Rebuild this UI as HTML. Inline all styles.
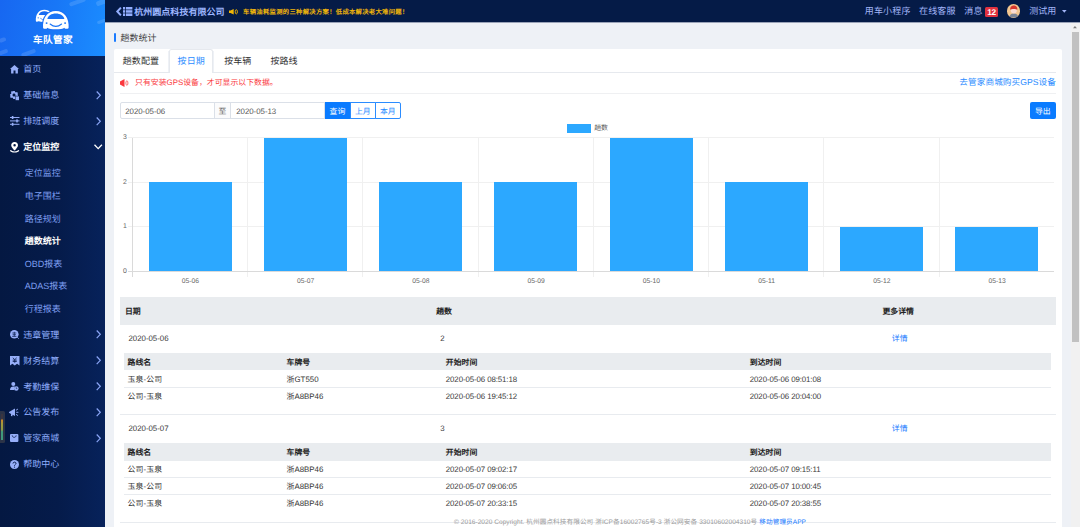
<!DOCTYPE html>
<html lang="zh-CN">
<head>
<meta charset="utf-8">
<title>趟数统计 - 车队管家</title>
<style>
*{box-sizing:border-box;margin:0;padding:0}
html,body{width:1080px;height:527px;overflow:hidden}
body{position:relative;background:#eef1f6;font-family:"Liberation Sans",sans-serif;color:#333;font-size:7.875px;text-rendering:geometricPrecision}
.t{position:absolute;white-space:nowrap;height:12px;line-height:12px}
.j{text-align:justify;text-align-last:justify}
.abs{position:absolute}
svg{position:absolute;overflow:visible}
#side{position:absolute;left:0;top:0;width:105px;height:527px;background:linear-gradient(90deg,#041842 0%,#051b4a 55%,#07225b 100%);overflow:hidden}
#logo{position:absolute;left:0;top:0;width:105px;height:56px;background:linear-gradient(100deg,#1767f1 0%,#1877f7 50%,#1b8dff 100%);overflow:hidden}
#top{position:absolute;left:105px;top:0;width:975px;height:22px;background:#051b47;box-shadow:0 1px 0 #9aa3b8}
#card{position:absolute;left:113.8px;top:49px;width:948.2px;height:478px;background:#fff;border-radius:2px 2px 0 0}
</style>
</head>
<body>
<div id="side">
<div id="logo">
<div class="abs" style="left:69px;top:0.2px;width:17px;height:4px;background:rgba(255,255,255,.13);border-radius:2px;transform:rotate(-20deg)"></div>
<div class="abs" style="left:96px;top:0.25px;width:10px;height:4.5px;background:rgba(255,255,255,.13);border-radius:2px;transform:rotate(-20deg)"></div>
<div class="abs" style="left:96.5px;top:19.5px;width:9px;height:3px;background:rgba(255,255,255,.13);border-radius:2px;transform:rotate(-20deg)"></div>
<div class="abs" style="left:-1px;top:38.25px;width:7px;height:3.5px;background:rgba(255,255,255,.13);border-radius:2px;transform:rotate(-20deg)"></div>
<div class="abs" style="left:-1.5px;top:50px;width:9px;height:4px;background:rgba(255,255,255,.13);border-radius:2px;transform:rotate(-20deg)"></div>
<div class="abs" style="left:21px;top:50.5px;width:15px;height:4px;background:rgba(255,255,255,.13);border-radius:2px;transform:rotate(-20deg)"></div>
<svg style="left:35px;top:9px" width="36" height="22" viewBox="0 0 36 22">
<g transform="translate(.6,.7) scale(.67) translate(-7.7,-2)"><path d="M8.1 19 C7.3 9 12.5 2 20.85 2 C29.2 2 34.4 9 33.6 19 Q33.3 19.9 32.3 19.8 L30.5 19.7 Q29.6 19.6 29.4 18.8 C27 20.8 14.7 20.8 12.3 18.8 Q12.1 19.6 11.2 19.7 L9.4 19.8 Q8.4 19.9 8.1 19 Z" fill="#fff"/>
<path d="M12.3 10 C13 6.500 16.500 4.400 20.85 4.400 C25.2 4.400 28.7 6.500 29.400 10 Z" fill="#186cf3"/>
<circle cx="11.600" cy="14.100" r=".95" fill="#186cf3"/><circle cx="30.100" cy="14.100" r=".95" fill="#186cf3"/>
<path d="M15.100 15 Q20.85 19.800 26.600 15" fill="none" stroke="#186cf3" stroke-width="1.05" stroke-linecap="round"/></g>
<path d="M8.1 19 C7.3 9 12.5 2 20.85 2 C29.2 2 34.4 9 33.6 19 Q33.3 19.9 32.3 19.8 L30.5 19.7 Q29.6 19.6 29.4 18.8 C27 20.8 14.7 20.8 12.3 18.8 Q12.1 19.6 11.2 19.7 L9.4 19.8 Q8.4 19.9 8.1 19 Z" fill="#fff" stroke="#1a70f5" stroke-width="2.200" paint-order="stroke"/>
<path d="M12.3 10 C13 6.500 16.500 4.400 20.85 4.400 C25.2 4.400 28.7 6.500 29.400 10 Z" fill="#1a74f6"/>
<circle cx="11.600" cy="14.100" r=".95" fill="#1a74f6"/><circle cx="30.100" cy="14.100" r=".95" fill="#1a74f6"/>
<path d="M15.100 15 Q20.85 19.800 26.600 15" fill="none" stroke="#1a74f6" stroke-width="1.05" stroke-linecap="round"/></svg>
<div class="t j" style="left:33px;top:34.5px;width:39.5px;font-size:9.6px;color:#fff;font-weight:bold;">车队管家</div>
</div>
<svg style="left:9.7px;top:64.8px" width="9" height="8.6" viewBox="0 0 9 8.6"><path d="M4.5 0 L9 4.1 L7.9 4.1 L7.9 8.6 L5.5 8.6 L5.5 5.6 L3.5 5.6 L3.5 8.6 L1.1 8.6 L1.1 4.1 L0 4.1 Z" fill="#97aff9"/></svg>
<div class="t j" style="left:23.2px;top:63.2px;width:18px;font-size:9px;color:#8fadfd;">首页</div>
<svg style="left:9.5px;top:90.5px" width="9" height="9.2" viewBox="0 0 9 9.2"><path d="M3.2 0 H4.8 L5.1 1 L6 1.4 L6.9 .9 L8 2 L7.5 2.9 L7.9 3.8 L8 4.8 H5.2 V8 H3.2 L2.9 7 L2 6.6 L1.1 7.1 L0 6 L.5 5.1 L.1 4.2 L0 3.2 L1 2.9 L1.4 2 L.9 1.1 L2 0 L2.9 .5 Z M4 2.5 A1.5 1.5 0 1 0 4 5.5 A1.5 1.5 0 1 0 4 2.5 Z" fill="#97aff9" fill-rule="evenodd"/><rect x="5.6" y="5.4" width="3.4" height="3.8" fill="#97aff9"/></svg>
<div class="t j" style="left:23.2px;top:89.1px;width:36px;font-size:9px;color:#8fadfd;">基础信息</div>
<svg style="left:96px;top:90.8px" width="5" height="8.6" viewBox="0 0 5 8.6"><path d="M.7 .5 L4.3 4.3 L.7 8.1" fill="none" stroke="#8aa4f5" stroke-width="1.2"/></svg>
<svg style="left:9.5px;top:116.1px" width="9.5" height="9.8" viewBox="0 0 9.5 9.8"><path d="M0 1.5 H9.5 M0 4.9 H9.5 M0 8.3 H9.5" stroke="#97aff9" stroke-width="1" fill="none"/><g fill="#97aff9"><rect x="1.8" y="0" width="1.6" height="3"/><rect x="6.2" y="3.4" width="1.6" height="3"/><rect x="1.8" y="6.8" width="1.6" height="3"/></g></svg>
<div class="t j" style="left:23.2px;top:115px;width:36px;font-size:9px;color:#8fadfd;">排班调度</div>
<svg style="left:96px;top:116.7px" width="5" height="8.6" viewBox="0 0 5 8.6"><path d="M.7 .5 L4.3 4.3 L.7 8.1" fill="none" stroke="#8aa4f5" stroke-width="1.2"/></svg>
<svg style="left:9.7px;top:141.8px" width="9.2" height="10.6" viewBox="0 0 9.2 10.6"><path d="M4.600 -.1 C6.800 -.1 8 1.400 8 3.200 C8 5.200 5.900 7.100 4.600 8.500 C3.300 7.100 1.200 5.200 1.200 3.200 C1.200 1.400 2.400 -.1 4.600 -.1 Z M4.600 1.900 A1.250 1.250 0 1 0 4.600 4.400 A1.250 1.250 0 1 0 4.600 1.900 Z" fill="#fff" fill-rule="evenodd"/><path d="M.4 8.200 C1.500 10.600 7.700 10.600 8.800 8.200" fill="none" stroke="#fff" stroke-width="1.150"/></svg>
<div class="t j" style="left:23.2px;top:141px;width:36px;font-size:9px;color:#fff;font-weight:bold;">定位监控</div>
<svg style="left:94.4px;top:144.2px" width="8.4" height="5.6" viewBox="0 0 8.4 5.6"><path d="M.5 .7 L4.2 4.6 L7.9 .7" fill="none" stroke="#fff" stroke-width="1.3"/></svg>
<svg style="left:9.9px;top:330px" width="9.4" height="9.4" viewBox="0 0 9.4 9.4"><circle cx="4.3" cy="4.3" r="4.3" fill="#97aff9"/><path d="M7.200 7.200 L8.700 8.700" stroke="#97aff9" stroke-width=".9"/><path d="M2.3 3 H6.3 M4.3 1.8 V6.3 M2.6 4.7 H6 M2.2 6.4 H6.4" stroke="#061b4b" stroke-width=".7" fill="none"/></svg>
<div class="t j" style="left:23.2px;top:328.6px;width:36px;font-size:9px;color:#8fadfd;">违章管理</div>
<svg style="left:96px;top:330.3px" width="5" height="8.6" viewBox="0 0 5 8.6"><path d="M.7 .5 L4.3 4.3 L.7 8.1" fill="none" stroke="#8aa4f5" stroke-width="1.2"/></svg>
<svg style="left:9.5px;top:355.9px" width="9.5" height="9.6" viewBox="0 0 9.5 9.6"><path d="M0 0 H9.5 V9.6 L7.1 7.8 L4.75 9.6 L2.4 7.8 L0 9.6 Z" fill="#97aff9"/><path d="M2.8 1.8 L4.75 3.6 L6.7 1.8 M2.7 4.1 H6.8 M2.7 5.5 H6.8 M4.75 3.6 V6.8" stroke="#061b4b" stroke-width=".8" fill="none"/></svg>
<div class="t j" style="left:23.2px;top:354.6px;width:36px;font-size:9px;color:#8fadfd;">财务结算</div>
<svg style="left:96px;top:356.3px" width="5" height="8.6" viewBox="0 0 5 8.6"><path d="M.7 .5 L4.3 4.3 L.7 8.1" fill="none" stroke="#8aa4f5" stroke-width="1.2"/></svg>
<svg style="left:9.9px;top:382.2px" width="8.6" height="8.8" viewBox="0 0 8.6 8.8"><circle cx="3.3" cy="2" r="2" fill="#97aff9"/><path d="M0 8 C0 5.5 1.5 4.4 3.3 4.4 C4 4.4 4.6 4.5 5 4.8 C4.2 5.6 4 6.8 4.4 8 Z" fill="#97aff9"/><circle cx="6.3" cy="6.5" r="2.3" fill="#97aff9"/><path d="M6.3 5.3 V6.6 H7.3" stroke="#061b4b" stroke-width=".6" fill="none"/></svg>
<div class="t j" style="left:23.2px;top:380.5px;width:36px;font-size:9px;color:#8fadfd;">考勤维保</div>
<svg style="left:96px;top:382.2px" width="5" height="8.6" viewBox="0 0 5 8.6"><path d="M.7 .5 L4.3 4.3 L.7 8.1" fill="none" stroke="#8aa4f5" stroke-width="1.2"/></svg>
<svg style="left:9.2px;top:407.9px" width="9.4" height="8.8" viewBox="0 0 9.4 8.8"><path d="M0 4 L6 .6 V8 L3.6 6.7 L3.3 8.3 L1.9 8 L2.1 5.9 L0 4.7 Z" fill="#97aff9"/><path d="M7 2.3 L9 1 M7.2 4.3 H9.4 M7 6.3 L9 7.6" stroke="#97aff9" stroke-width=".9" fill="none"/></svg>
<div class="t j" style="left:23.2px;top:406.3px;width:36px;font-size:9px;color:#8fadfd;">公告发布</div>
<svg style="left:96px;top:408px" width="5" height="8.6" viewBox="0 0 5 8.6"><path d="M.7 .5 L4.3 4.3 L.7 8.1" fill="none" stroke="#8aa4f5" stroke-width="1.2"/></svg>
<svg style="left:9.9px;top:434.2px" width="8.4" height="8" viewBox="0 0 8.4 8"><rect x="0" y="0" width="8.4" height="8" rx="1" fill="#97aff9"/><path d="M2.2 1.4 C2.4 4 6 4 6.2 1.4" stroke="#061b4b" stroke-width=".8" fill="none"/></svg>
<div class="t j" style="left:23.2px;top:432.2px;width:36px;font-size:9px;color:#8fadfd;">管家商城</div>
<svg style="left:96px;top:433.9px" width="5" height="8.6" viewBox="0 0 5 8.6"><path d="M.7 .5 L4.3 4.3 L.7 8.1" fill="none" stroke="#8aa4f5" stroke-width="1.2"/></svg>
<svg style="left:9.5px;top:459.5px" width="9" height="9" viewBox="0 0 9 9"><circle cx="4.5" cy="4.5" r="4.5" fill="#97aff9"/><path d="M3 3.5 C3 1.7 6 1.7 6 3.4 C6 4.5 4.5 4.5 4.5 5.7" stroke="#061b4b" stroke-width="1" fill="none"/><circle cx="4.5" cy="7.1" r=".6" fill="#061b4b"/></svg>
<div class="t j" style="left:23.2px;top:458px;width:36px;font-size:9px;color:#8fadfd;">帮助中心</div>
<div class="t j" style="left:24.7px;top:167.4px;width:36px;font-size:9px;color:#7f9ff2;">定位监控</div>
<div class="t j" style="left:24.7px;top:190.1px;width:36px;font-size:9px;color:#7f9ff2;">电子围栏</div>
<div class="t j" style="left:24.7px;top:212.6px;width:36px;font-size:9px;color:#7f9ff2;">路径规划</div>
<div class="t j" style="left:24.7px;top:234.9px;width:36px;font-size:9px;color:#fff;font-weight:bold;">趟数统计</div>
<div class="t" style="left:24.7px;top:257.5px;font-size:9px;color:#7f9ff2;">OBD报表</div>
<div class="t" style="left:24.7px;top:280.1px;font-size:9px;color:#7f9ff2;">ADAS报表</div>
<div class="t j" style="left:24.7px;top:302.6px;width:36px;font-size:9px;color:#7f9ff2;">行程报表</div>
<div class="abs" style="left:0px;top:411px;width:5.2px;height:32px;background:#2b3347;border-radius:0 1.5px 1.5px 0"></div>
<div class="abs" style="left:1px;top:413.6px;width:2.4px;height:26.6px;background:linear-gradient(180deg,#3a3540 0%,#3a3540 18%,#c8862e 24%,#a39a3c 38%,#8d9a45 60%,#3f9a7c 68%,#3f9a7c 100%);"></div>
</div>
<div id="top">
<svg style="left:10.6px;top:7px" width="5.6" height="9" viewBox="0 0 5.6 9"><path d="M4.9 .6 L1.3 4.5 L4.9 8.4" fill="none" stroke="#93aefe" stroke-width="2"/></svg>
<svg style="left:18.2px;top:7px" width="9.4" height="9" viewBox="0 0 9.4 9"><g fill="#93aefe"><rect x="0" y="0" width="2.2" height="2.5"/><rect x="3" y="0" width="6.4" height="2.5"/><rect x="0" y="3.2" width="2.2" height="2.5"/><rect x="3" y="3.2" width="6.4" height="2.5"/><rect x="0" y="6.4" width="2.2" height="2.6"/><rect x="3" y="6.4" width="6.4" height="2.6"/></g></svg>
<div class="t j" style="left:29.3px;top:5.5px;width:90.2px;font-size:9px;color:#9db6ff;font-weight:bold;">杭州圆点科技有限公司</div>
<svg style="left:123.9px;top:8.7px" width="9.2" height="5.6" viewBox="0 0 9.2 5.6"><path d="M0 1.600 L1.500 1.600 L4.700 0 V5.600 L1.500 4 H0 Z" fill="#f2b705"/><ellipse cx="7.3" cy="2.8" rx="1.1" ry="2.1" fill="none" stroke="#f2b705" stroke-width=".9"/></svg>
<div class="t j" style="left:138.1px;top:6.5px;width:165.2px;font-size:6.34px;color:#f0b50a;font-weight:bold;">车辆油耗监测的三种解决方案！低成本解决老大难问题！</div>
<div class="t j" style="left:759.8px;top:5.2px;width:45.6px;font-size:9px;color:#a3b6f8;">用车小程序</div>
<div class="t j" style="left:814.1px;top:5.2px;width:36.4px;font-size:9px;color:#a3b6f8;">在线客服</div>
<div class="t j" style="left:859.3px;top:5.2px;width:18.2px;font-size:9px;color:#a3b6f8;">消息</div>
<div class="abs" style="left:880.2px;top:6.8px;width:12.8px;height:10.1px;background:#e1323f;border-radius:1.500px"></div>
<div class="t" style="left:880.2px;top:6.4px;font-size:8.3px;letter-spacing:-0.3px;color:#fff;font-weight:bold;width:12.800px;text-align:center;">12</div>
<div class="abs" style="left:901.7px;top:4.2px;width:13.6px;height:13.6px;border-radius:50%;overflow:hidden;background:#f3c690"><svg style="left:0;top:0" width="13.6" height="13.6" viewBox="0 0 13.6 13.6"><path d="M2.6 13.6 C2.6 10.2 4.6 9.4 6.8 9.4 C9 9.4 11 10.2 11 13.6 Z" fill="#7c8596"/><circle cx="6.8" cy="6.6" r="3" fill="#fbdcd2"/><path d="M3.2 5.8 C3 2.6 5 1.6 6.8 1.6 C8.6 1.6 10.6 2.6 10.4 5.8 C9.2 4.8 4.4 4.8 3.2 5.8 Z" fill="#d8372e"/></svg></div>
<div class="t j" style="left:924.2px;top:5.2px;width:27px;font-size:9px;color:#a3b6f8;">测试用</div>
<svg style="left:956.5px;top:9.6px" width="4.6" height="2.8" viewBox="0 0 4.6 2.8"><path d="M0 0 H4.6 L2.3 2.8 Z" fill="#a3b6f8"/></svg>
</div>
<div class="abs" style="left:113.5px;top:33px;width:2.5px;height:9px;background:#1a7bff;border-radius:1px"></div>
<div class="t j" style="left:120.4px;top:31.6px;width:36px;font-size:9px;color:#444;">趟数统计</div>
<div id="card"></div>
<div class="abs" style="left:113.8px;top:72px;width:54.8px;height:1px;background:#e6e9ee;"></div>
<div class="abs" style="left:213.3px;top:72px;width:842.4px;height:1px;background:#e6e9ee;"></div>
<div class="abs" style="left:168.6px;top:49px;width:44.6px;height:24px;background:#fff;border:1px solid #e6e9ee;border-bottom:0;border-radius:2.5px 2.5px 0 0"></div>
<div class="abs" style="left:168.2px;top:51px;width:1px;height:21px;background:#eef1f6;"></div>
<div class="abs" style="left:213.3px;top:51px;width:1px;height:21px;background:#eef1f6;"></div>
<div class="t j" style="left:122.8px;top:54.6px;width:36.2px;font-size:9px;color:#333;">趟数配置</div>
<div class="t j" style="left:177.6px;top:54.6px;width:27.2px;font-size:9px;color:#2b8cff;">按日期</div>
<div class="t j" style="left:224.2px;top:54.6px;width:27.2px;font-size:9px;color:#333;">按车辆</div>
<div class="t j" style="left:270.4px;top:54.6px;width:27.2px;font-size:9px;color:#333;">按路线</div>
<svg style="left:119.7px;top:78.5px" width="8.4" height="8.1" viewBox="0 0 8.4 8.1"><path d="M0 2.500 L4.500 0 V8.100 L0 5.600 Z" fill="#fa383d"/><ellipse cx="6.9" cy="4.05" rx="1.05" ry="2.25" fill="none" stroke="#fa383d" stroke-width=".85" opacity=".85"/></svg>
<div class="t j" style="left:135px;top:77.2px;width:142.7px;font-size:7.88px;color:#fa383d;">只有安装GPS设备，才可显示以下数据。</div>
<div class="t j" style="left:959.3px;top:76.2px;width:96.6px;font-size:8.65px;color:#2b8cff;">去管家商城购买GPS设备</div>
<div class="abs" style="left:120px;top:92.6px;width:935.6px;height:1px;background:#eff0f2;"></div>
<div class="abs" style="left:120.2px;top:102.2px;width:94.4px;height:17.2px;background:#fff;border:1px solid #dbe0e8;border-radius:2px 0 0 2px"></div>
<div class="t" style="left:125.2px;top:106px;font-size:7.88px;letter-spacing:-0.03px;color:#555;">2020-05-06</div>
<div class="abs" style="left:213.6px;top:102.2px;width:17.8px;height:17.2px;background:#fbfbfc;border:1px solid #dbe0e8"></div>
<div class="t j" style="left:218.4px;top:106px;width:7.88px;font-size:7.88px;color:#666;">至</div>
<div class="abs" style="left:230.4px;top:102.2px;width:95px;height:17.2px;background:#fff;border:1px solid #dbe0e8"></div>
<div class="t" style="left:236.2px;top:106px;font-size:7.88px;letter-spacing:-0.03px;color:#555;">2020-05-13</div>
<div class="abs" style="left:324.7px;top:102.2px;width:25.5px;height:17.2px;background:#0a7bff;"></div>
<div class="t j" style="left:329.6px;top:106px;width:15.75px;font-size:7.88px;color:#fff;">查询</div>
<div class="abs" style="left:350.2px;top:102.2px;width:25.5px;height:17.2px;background:#fff;border:1px solid #2b8cff"></div>
<div class="t j" style="left:354.9px;top:106px;width:15.75px;font-size:7.88px;color:#2b8cff;">上月</div>
<div class="abs" style="left:375px;top:102.2px;width:25.7px;height:17.2px;background:#fff;border:1px solid #2b8cff;border-radius:0 2px 2px 0"></div>
<div class="t j" style="left:380px;top:106px;width:15.75px;font-size:7.88px;color:#2b8cff;">本月</div>
<div class="abs" style="left:1030px;top:102.2px;width:25.6px;height:17.2px;background:#0a7bff;border-radius:2px"></div>
<div class="t j" style="left:1035px;top:106px;width:15.75px;font-size:7.88px;color:#fff;">导出</div>
<div class="abs" style="left:567.1px;top:124.4px;width:24.3px;height:8.4px;background:#2ca8ff;"></div>
<div class="t j" style="left:594.2px;top:122.7px;width:13.8px;font-size:6.9px;color:#555;">趟数</div>
<div class="abs" style="left:127.8px;top:137.4px;width:926.5px;height:1px;background:#f0f0f0;"></div>
<div class="abs" style="left:127.8px;top:181.87px;width:926.5px;height:1px;background:#f0f0f0;"></div>
<div class="abs" style="left:127.8px;top:226.33px;width:926.5px;height:1px;background:#f0f0f0;"></div>
<div class="abs" style="left:247.05px;top:137.9px;width:1px;height:138.9px;background:#f0f0f0;"></div>
<div class="abs" style="left:362.3px;top:137.9px;width:1px;height:138.9px;background:#f0f0f0;"></div>
<div class="abs" style="left:477.55px;top:137.9px;width:1px;height:138.9px;background:#f0f0f0;"></div>
<div class="abs" style="left:592.8px;top:137.9px;width:1px;height:138.9px;background:#f0f0f0;"></div>
<div class="abs" style="left:708.05px;top:137.9px;width:1px;height:138.9px;background:#f0f0f0;"></div>
<div class="abs" style="left:823.3px;top:137.9px;width:1px;height:138.9px;background:#f0f0f0;"></div>
<div class="abs" style="left:938.55px;top:137.9px;width:1px;height:138.9px;background:#f0f0f0;"></div>
<div class="abs" style="left:131.8px;top:137.9px;width:1px;height:138.9px;background:#dadada;"></div>
<div class="abs" style="left:127.8px;top:270.8px;width:926.5px;height:1px;background:#dadada;"></div>
<div class="abs" style="left:148.7px;top:182.37px;width:83px;height:88.53px;background:#2ca8ff;"></div>
<div class="abs" style="left:263.95px;top:137.9px;width:83px;height:133px;background:#2ca8ff;"></div>
<div class="abs" style="left:379.2px;top:182.37px;width:83px;height:88.53px;background:#2ca8ff;"></div>
<div class="abs" style="left:494.45px;top:182.37px;width:83px;height:88.53px;background:#2ca8ff;"></div>
<div class="abs" style="left:609.7px;top:137.9px;width:83px;height:133px;background:#2ca8ff;"></div>
<div class="abs" style="left:724.95px;top:182.37px;width:83px;height:88.53px;background:#2ca8ff;"></div>
<div class="abs" style="left:840.2px;top:226.83px;width:83px;height:44.07px;background:#2ca8ff;"></div>
<div class="abs" style="left:955.45px;top:226.83px;width:83px;height:44.07px;background:#2ca8ff;"></div>
<div class="t" style="left:118.3px;top:132.3px;font-size:6.9px;color:#666;width:8.600px;text-align:right;">3</div>
<div class="t" style="left:118.3px;top:176.77px;font-size:6.9px;color:#666;width:8.600px;text-align:right;">2</div>
<div class="t" style="left:118.3px;top:221.23px;font-size:6.9px;color:#666;width:8.600px;text-align:right;">1</div>
<div class="t" style="left:118.3px;top:265.7px;font-size:6.9px;color:#666;width:8.600px;text-align:right;">0</div>
<div class="t" style="left:170.43px;top:275.8px;font-size:6.75px;color:#666;width:40px;text-align:center;">05-06</div>
<div class="t" style="left:285.68px;top:275.8px;font-size:6.75px;color:#666;width:40px;text-align:center;">05-07</div>
<div class="t" style="left:400.93px;top:275.8px;font-size:6.75px;color:#666;width:40px;text-align:center;">05-08</div>
<div class="t" style="left:516.17px;top:275.8px;font-size:6.75px;color:#666;width:40px;text-align:center;">05-09</div>
<div class="t" style="left:631.42px;top:275.8px;font-size:6.75px;color:#666;width:40px;text-align:center;">05-10</div>
<div class="t" style="left:746.67px;top:275.8px;font-size:6.75px;color:#666;width:40px;text-align:center;">05-11</div>
<div class="t" style="left:861.92px;top:275.8px;font-size:6.75px;color:#666;width:40px;text-align:center;">05-12</div>
<div class="t" style="left:977.17px;top:275.8px;font-size:6.75px;color:#666;width:40px;text-align:center;">05-13</div>
<div class="abs" style="left:119.9px;top:297.3px;width:935.7px;height:27.4px;background:#e9ecef;"></div>
<div class="t j" style="left:125px;top:306px;width:15.75px;font-size:7.88px;color:#222;font-weight:bold;">日期</div>
<div class="t j" style="left:436.2px;top:306px;width:15.75px;font-size:7.88px;color:#222;font-weight:bold;">趟数</div>
<div class="t j" style="left:882.4px;top:306px;width:31.5px;font-size:7.88px;color:#222;font-weight:bold;">更多详情</div>
<div class="t" style="left:128.5px;top:333.1px;font-size:7.88px;letter-spacing:-0.03px;color:#3a3a3a;">2020-05-06</div>
<div class="t" style="left:440.3px;top:333.1px;font-size:7.88px;color:#3a3a3a;">2</div>
<div class="t j" style="left:891.8px;top:333.1px;width:15.75px;font-size:7.88px;color:#1a7bff;">详情</div>
<div class="abs" style="left:124.3px;top:352.7px;width:926.5px;height:17.8px;background:#e9ecef;"></div>
<div class="t j" style="left:127.6px;top:356.6px;width:23.62px;font-size:7.88px;color:#222;font-weight:bold;">路线名</div>
<div class="t j" style="left:286.6px;top:356.6px;width:23.62px;font-size:7.88px;color:#222;font-weight:bold;">车牌号</div>
<div class="t j" style="left:445.8px;top:356.6px;width:31.5px;font-size:7.88px;color:#222;font-weight:bold;">开始时间</div>
<div class="t j" style="left:749.8px;top:356.6px;width:31.5px;font-size:7.88px;color:#222;font-weight:bold;">到达时间</div>
<div class="t" style="left:127.6px;top:374px;font-size:7.88px;color:#333;width:34.6px;text-align:justify;text-align-last:justify;">玉泉-公司</div>
<div class="t" style="left:286.6px;top:374px;font-size:7.88px;color:#333;">浙GT550</div>
<div class="t" style="left:445.8px;top:374px;font-size:7.88px;letter-spacing:-0.1px;color:#3a3a3a;">2020-05-06 08:51:18</div>
<div class="t" style="left:749.8px;top:374px;font-size:7.88px;letter-spacing:-0.1px;color:#3a3a3a;">2020-05-06 09:01:08</div>
<div class="abs" style="left:124.3px;top:387px;width:926.5px;height:1px;background:#e8ebef;"></div>
<div class="t" style="left:127.6px;top:390.9px;font-size:7.88px;color:#333;width:34.6px;text-align:justify;text-align-last:justify;">公司-玉泉</div>
<div class="t" style="left:286.6px;top:390.9px;font-size:7.88px;color:#333;">浙A8BP46</div>
<div class="t" style="left:445.8px;top:390.9px;font-size:7.88px;letter-spacing:-0.1px;color:#3a3a3a;">2020-05-06 19:45:12</div>
<div class="t" style="left:749.8px;top:390.9px;font-size:7.88px;letter-spacing:-0.1px;color:#3a3a3a;">2020-05-06 20:04:00</div>
<div class="abs" style="left:119.9px;top:414px;width:935.7px;height:1px;background:#e8ebef;"></div>
<div class="t" style="left:128.5px;top:423.4px;font-size:7.88px;letter-spacing:-0.03px;color:#3a3a3a;">2020-05-07</div>
<div class="t" style="left:440.3px;top:423.4px;font-size:7.88px;color:#3a3a3a;">3</div>
<div class="t j" style="left:891.8px;top:423.4px;width:15.75px;font-size:7.88px;color:#1a7bff;">详情</div>
<div class="abs" style="left:124.3px;top:443px;width:926.5px;height:17.8px;background:#e9ecef;"></div>
<div class="t j" style="left:127.6px;top:446.9px;width:23.62px;font-size:7.88px;color:#222;font-weight:bold;">路线名</div>
<div class="t j" style="left:286.6px;top:446.9px;width:23.62px;font-size:7.88px;color:#222;font-weight:bold;">车牌号</div>
<div class="t j" style="left:445.8px;top:446.9px;width:31.5px;font-size:7.88px;color:#222;font-weight:bold;">开始时间</div>
<div class="t j" style="left:749.8px;top:446.9px;width:31.5px;font-size:7.88px;color:#222;font-weight:bold;">到达时间</div>
<div class="t" style="left:127.6px;top:464.3px;font-size:7.88px;color:#333;width:34.6px;text-align:justify;text-align-last:justify;">公司-玉泉</div>
<div class="t" style="left:286.6px;top:464.3px;font-size:7.88px;color:#333;">浙A8BP46</div>
<div class="t" style="left:445.8px;top:464.3px;font-size:7.88px;letter-spacing:-0.1px;color:#3a3a3a;">2020-05-07 09:02:17</div>
<div class="t" style="left:749.8px;top:464.3px;font-size:7.88px;letter-spacing:-0.1px;color:#3a3a3a;">2020-05-07 09:15:11</div>
<div class="abs" style="left:124.3px;top:477px;width:926.5px;height:1px;background:#e8ebef;"></div>
<div class="t" style="left:127.6px;top:481.2px;font-size:7.88px;color:#333;width:34.6px;text-align:justify;text-align-last:justify;">玉泉-公司</div>
<div class="t" style="left:286.6px;top:481.2px;font-size:7.88px;color:#333;">浙A8BP46</div>
<div class="t" style="left:445.8px;top:481.2px;font-size:7.88px;letter-spacing:-0.1px;color:#3a3a3a;">2020-05-07 09:06:05</div>
<div class="t" style="left:749.8px;top:481.2px;font-size:7.88px;letter-spacing:-0.1px;color:#3a3a3a;">2020-05-07 10:00:45</div>
<div class="abs" style="left:124.3px;top:494px;width:926.5px;height:1px;background:#e8ebef;"></div>
<div class="t" style="left:127.6px;top:498.1px;font-size:7.88px;color:#333;width:34.6px;text-align:justify;text-align-last:justify;">公司-玉泉</div>
<div class="t" style="left:286.6px;top:498.1px;font-size:7.88px;color:#333;">浙A8BP46</div>
<div class="t" style="left:445.8px;top:498.1px;font-size:7.88px;letter-spacing:-0.1px;color:#3a3a3a;">2020-05-07 20:33:15</div>
<div class="t" style="left:749.8px;top:498.1px;font-size:7.88px;letter-spacing:-0.1px;color:#3a3a3a;">2020-05-07 20:38:55</div>
<div class="abs" style="left:119.9px;top:522px;width:935.7px;height:1px;background:#e8ebef;"></div>
<div class="t j" style="left:454px;top:516.9px;width:352px;font-size:6.6px;color:#9a9a9a">© 2016-2020 Copyright. 杭州圆点科技有限公司 浙ICP备16002765号-3 浙公网安备 33010602004310号 <span style="color:#1a7bff">移动管理员APP</span></div>
<div class="abs" style="left:1070.5px;top:22.5px;width:9.5px;height:504.5px;background:#f1f1f1;"></div>
<div class="abs" style="left:1071.9px;top:32.2px;width:6.8px;height:309.8px;background:#c1c1c1;"></div>
<svg style="left:1073.1px;top:26.3px" width="3.9" height="2.2" viewBox="0 0 3.9 2.2"><path d="M0 2.200 L1.950 0 L3.900 2.200 Z" fill="#7a7a7a"/></svg>
</body>
</html>
